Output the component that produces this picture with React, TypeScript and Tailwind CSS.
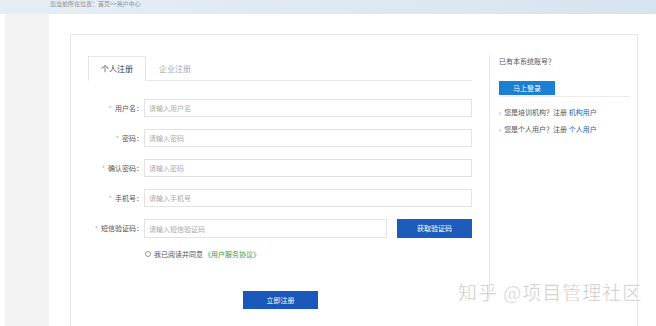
import { useState } from 'react'

const font = { fontFamily: '"Noto Sans CJK SC", "Liberation Sans", sans-serif' }

type Field = { label: string; placeholder: string }

const fields: Field[] = [
    { label: '用户名', placeholder: '请输入用户名' },
    { label: '密码', placeholder: '请输入密码' },
    { label: '确认密码', placeholder: '请输入密码' },
    { label: '手机号', placeholder: '请输入手机号' },
]

function Label({ text }: { text: string }) {
    return (
        <div className="w-[56px] shrink-0 text-right text-[7px] text-[#555] pr-[1px]">
            <span className="text-[#c9a0a0] mr-[3px]">*</span>
            {text}：
        </div>
    )
}

export default function App() {
    const [tab, setTab] = useState<number>(0)
    const [agree, setAgree] = useState<boolean>(false)

    return (
        <div className="relative w-[656px] h-[326px] overflow-hidden bg-white" style={font}>
            {/* Top banner */}
            <div className="h-[14px] bg-gradient-to-r from-[#e6eef5] via-[#dfe9f2] to-[#d6e4ef] pl-[50px] overflow-hidden">
                <div className="text-[6px] leading-[7px] text-[#8a949c]">您当前所在位置：首页&gt;&gt;用户中心</div>
            </div>

            <div className="flex h-[312px]">
                {/* Left strip */}
                <div className="w-[52px] shrink-0 pl-[5px] pr-[3px]">
                    <div className="h-full bg-[#f3f3f3]" />
                </div>

                {/* Main panel */}
                <div className="flex-1 pl-[18px] pt-[20px]">
                    <div className="w-[568px] h-[300px] border border-[#e6e6e6] flex">
                        {/* Form column */}
                        <div className="w-[418px] shrink-0 pl-[17px] pt-[21px]">
                            <div className="w-[384px] h-[25px] border-b border-[#e6e6e6] flex items-end">
                                <button
                                    onClick={() => setTab(0)}
                                    className={`w-[58px] h-[25px] text-[8px] -mb-px ${tab === 0 ? 'bg-white border border-[#e6e6e6] border-b-white text-[#444]' : 'text-[#aaa]'}`}
                                >
                                    个人注册
                                </button>
                                <button
                                    onClick={() => setTab(1)}
                                    className={`w-[58px] h-[25px] text-[8px] -mb-px ${tab === 1 ? 'bg-white border border-[#e6e6e6] border-b-white text-[#444]' : 'text-[#aaa]'}`}
                                >
                                    企业注册
                                </button>
                            </div>

                            <div className="flex flex-col gap-[12px] mt-[18px]">
                                {fields.map(f => (
                                    <div key={f.label} className="flex items-center">
                                        <Label text={f.label} />
                                        <input
                                            placeholder={f.placeholder}
                                            type={f.label.includes('密码') ? 'password' : 'text'}
                                            className="w-[328px] h-[18px] border border-[#e3e3e3] px-[4px] text-[7px] text-[#555] placeholder:text-[#aaa] outline-none"
                                        />
                                    </div>
                                ))}
                                <div className="flex items-center">
                                    <Label text="短信验证码" />
                                    <input
                                        placeholder="请输入短信验证码"
                                        className="w-[243px] h-[19px] border border-[#e3e3e3] px-[4px] text-[7px] text-[#555] placeholder:text-[#aaa] outline-none"
                                    />
                                    <button className="ml-[10px] w-[75px] h-[19px] bg-[#1d5cbb] text-white text-[7px]">获取验证码</button>
                                </div>
                            </div>

                            <label className="flex items-center ml-[57px] mt-[11px] text-[7px] text-[#555] cursor-pointer">
                                <span
                                    onClick={() => setAgree(!agree)}
                                    className={`w-[6px] h-[6px] rounded-full border border-[#999] mr-[3px] ${agree ? 'bg-[#1d5cbb]' : ''}`}
                                />
                                我已阅读并同意<span className="text-[#3a9a3a] ml-[1px]">《用户服务协议》</span>
                            </label>

                            <div className="mt-[24px] ml-[155px]">
                                <button className="w-[75px] h-[18px] bg-[#1a57ba] text-white text-[7px]">立即注册</button>
                            </div>
                        </div>

                        {/* Right column */}
                        <div className="flex-1 mt-[20px] mb-[34px] border-l border-[#e6e6e6] pl-[9px] pr-[7px]">
                            <div className="text-[7px] text-[#555] mt-[1px]">已有本系统账号？</div>
                            <div className="mt-[5px] border-b border-[#ececec]">
                                <button className="w-[56px] h-[14px] bg-[#1b7fd2] text-white text-[7px]">马上登录</button>
                            </div>
                            <div className="mt-[10px] flex flex-col gap-[7px] text-[7px] text-[#555]">
                                <div><span className="text-[#888] mr-[3px]">›</span>您是培训机构？注册 <span className="text-[#2a5fb0]">机构用户</span></div>
                                <div><span className="text-[#888] mr-[3px]">›</span>您是个人用户？注册 <span className="text-[#2a5fb0]">个人用户</span></div>
                            </div>
                        </div>
                    </div>
                </div>
            </div>

            {/* Watermark */}
            <div
                className="absolute left-[458px] top-[280px] text-[19px] leading-[24px] text-[#c4c4c4] tracking-[1px]"
                style={{ WebkitTextStroke: '0.5px #ffffff' }}
            >
                知乎 @项目管理社区
            </div>
        </div>
    )
}
